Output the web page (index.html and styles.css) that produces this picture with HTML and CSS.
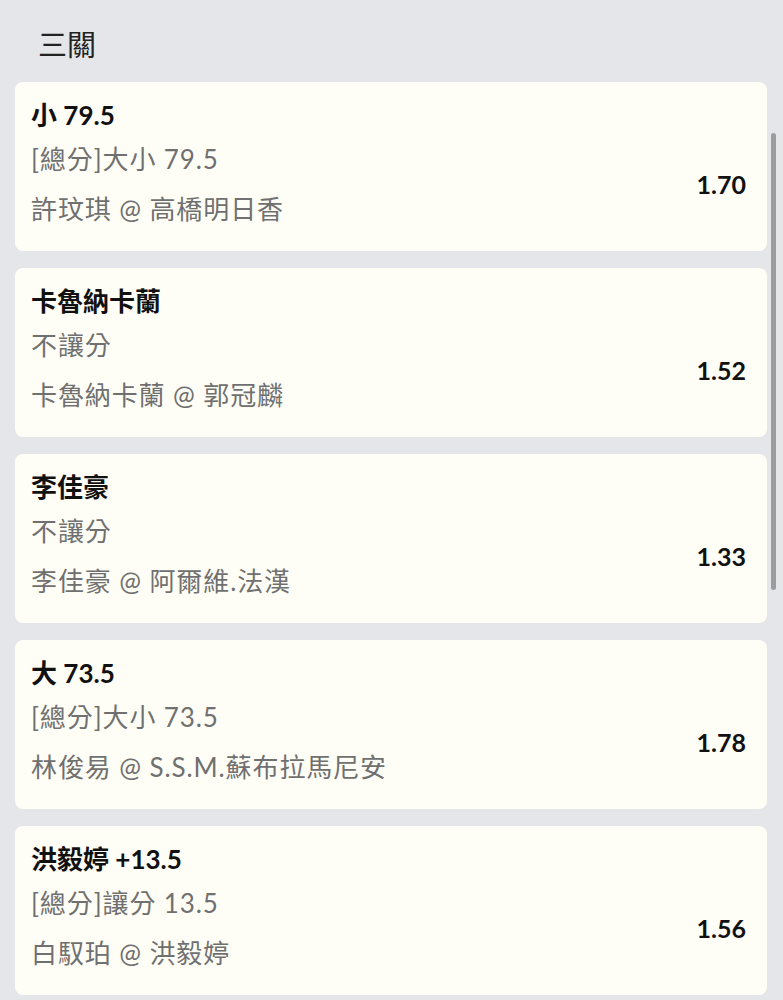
FILE: index.html
```html
<!DOCTYPE html>
<html lang="zh-Hant">
<head>
    <meta charset="UTF-8">
    <meta name="viewport" content="width=device-width, initial-scale=1.0">
    <title>三關</title>
    <link rel="stylesheet" href="styles.css">
</head>
<body>
    <h1 class="titulo">三關</h1>

    <div class="lista">
        <div class="tarjeta">
            <div class="seleccion">小 79.5</div>
            <div class="detalle">
                <div class="lineas">
                    <div class="linea">[總分]大小 79.5</div>
                    <div class="linea">許玟琪 @ 高橋明日香</div>
                </div>
                <div class="cuota">1.70</div>
            </div>
        </div>

        <div class="tarjeta">
            <div class="seleccion">卡魯納卡蘭</div>
            <div class="detalle">
                <div class="lineas">
                    <div class="linea">不讓分</div>
                    <div class="linea">卡魯納卡蘭 @ 郭冠麟</div>
                </div>
                <div class="cuota">1.52</div>
            </div>
        </div>

        <div class="tarjeta">
            <div class="seleccion">李佳豪</div>
            <div class="detalle">
                <div class="lineas">
                    <div class="linea">不讓分</div>
                    <div class="linea">李佳豪 @ 阿爾維.法漢</div>
                </div>
                <div class="cuota">1.33</div>
            </div>
        </div>

        <div class="tarjeta">
            <div class="seleccion">大 73.5</div>
            <div class="detalle">
                <div class="lineas">
                    <div class="linea">[總分]大小 73.5</div>
                    <div class="linea">林俊易 @ S.S.M.蘇布拉馬尼安</div>
                </div>
                <div class="cuota">1.78</div>
            </div>
        </div>

        <div class="tarjeta">
            <div class="seleccion">洪毅婷 +13.5</div>
            <div class="detalle">
                <div class="lineas">
                    <div class="linea">[總分]讓分 13.5</div>
                    <div class="linea">白馭珀 @ 洪毅婷</div>
                </div>
                <div class="cuota">1.56</div>
            </div>
        </div>
    </div>

    <!-- barra de desplazamiento superpuesta -->
    <div class="barra"></div>
</body>
</html>
```

FILE: styles.css
```css
html, body {
    height: 100%;
}
body {
    margin: 0;
    overflow: hidden;
    position: relative;
    background-color: #e5e6ea;
    font-family: Lato, "Noto Sans CJK TC", sans-serif;
    color: #111;
}
.titulo {
    margin: 0;
    height: 82px;
    padding-left: 38px;
    padding-top: 4px;
    display: flex;
    align-items: center;
    box-sizing: border-box;
    font-size: 29px;
    font-weight: normal;
    color: #222;
}
.lista {
    display: flex;
    flex-direction: column;
    gap: 17px;
    padding: 0 16px 0 15px;
}
.tarjeta {
    background-color: #fffef6;
    border-radius: 8px;
    padding: 14px 21px 15px 16px;
    height: 169px;
    box-sizing: border-box;
}
.seleccion {
    font-size: 26px;
    font-weight: bold;
    line-height: 38px;
    color: #111;
}
.detalle {
    display: flex;
    align-items: center;
    justify-content: space-between;
}
.linea {
    font-size: 26px;
    line-height: 50px;
    color: #707070;
    letter-spacing: 0.9px;
}
.cuota {
    font-size: 25px;
    font-weight: bold;
    color: #111;
}
.barra {
    position: absolute;
    left: 771px;
    top: 133px;
    width: 5px;
    height: 457px;
    border-radius: 3px;
    background-color: #9c9c9c;
}
```
